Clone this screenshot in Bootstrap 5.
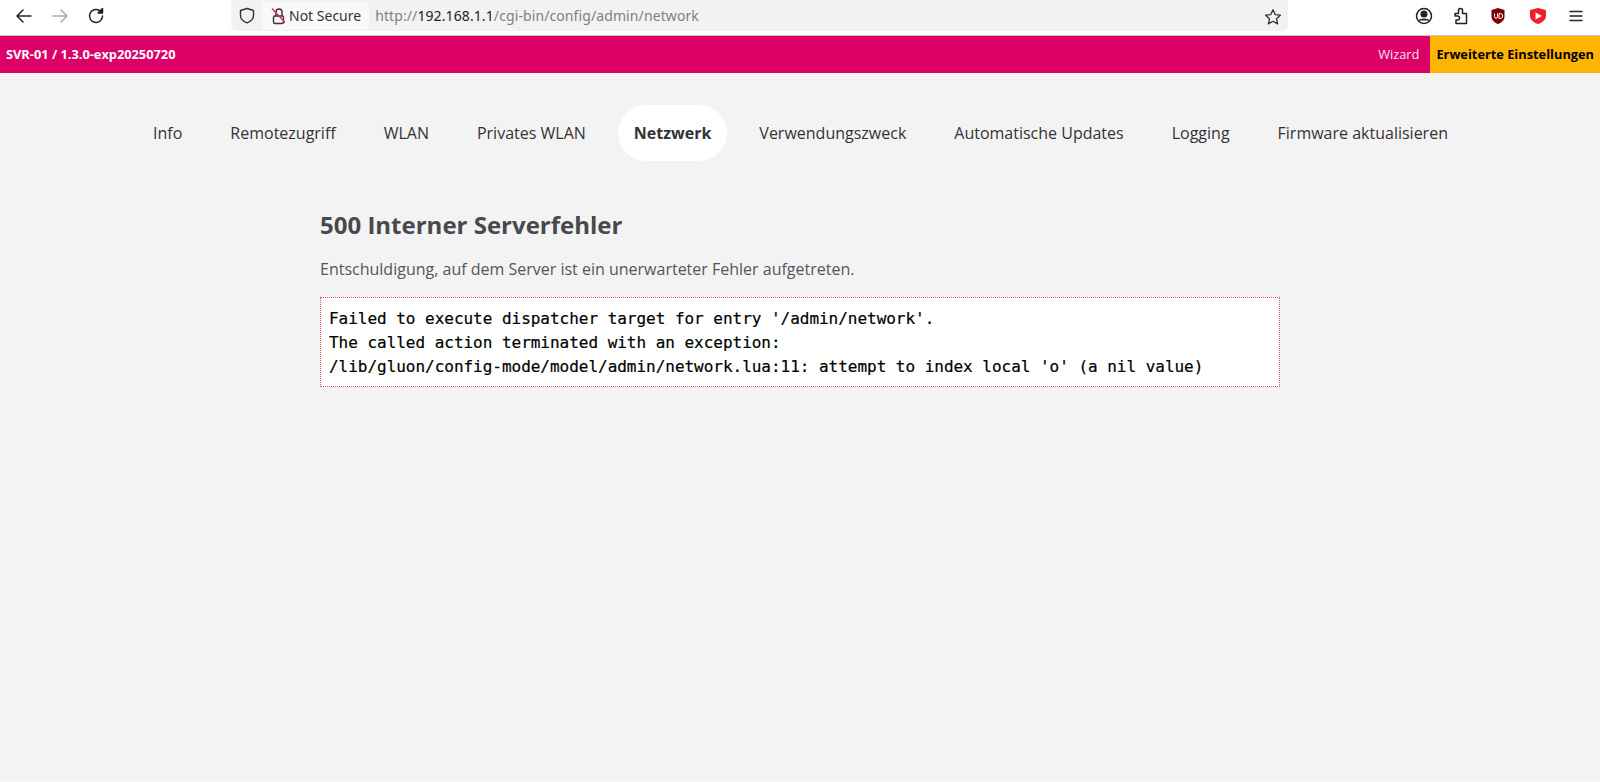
<!DOCTYPE html>
<html lang="de">
<head>
<meta charset="utf-8">
<title>Netzwerk</title>
<link rel="stylesheet" href="https://cdn.jsdelivr.net/npm/bootstrap@5.3.0/dist/css/bootstrap.min.css">
<style>
html,body{height:100%;}
body{background:#f3f3f3;font-family:"Open Sans","Noto Sans",sans-serif;overflow:hidden;border-bottom:1px solid #f7f7f7;}
.chrome-bar{height:36px;background:#fff;border-bottom:1px solid #c8c8c8;}
.chrome-nav{width:231px;height:31px;padding-left:15px;gap:18px;}
.chrome-btn{width:18px;height:18px;display:block;}
.url-box{width:1057px;height:31px;background:#f2f2f2;border-radius:0 0 6px 6px;font-family:"Noto Sans",sans-serif;font-size:14px;}
.shield-wrap{width:31px;}
.secure-chip{height:28px;background:#f9f9f9;border-radius:4px;padding:0 8px 0 9px;color:#333;gap:3px;margin-right:6px;}
.url-text{color:#808080;letter-spacing:.1px;}
.url-text b{font-weight:400;color:#222;}
.star-wrap{padding-right:6px;}
.tool-row{width:312px;height:31px;padding-left:127px;gap:19px;}
.tool-ico{width:18px;height:18px;display:block;flex:none;}
.tool-ico:nth-child(4){margin-left:3px;}
.tool-ico:nth-child(5){margin-left:1px;}
.top-strip{height:37px;background:#dc0067;color:#fff;font-size:12.8px;}
.site-name{font-weight:700;padding-left:6px;}
.wizard-link{color:#fff;text-decoration:none;padding-right:11px;opacity:.9;}
.expert-link{background:#ffb400;color:#000;font-weight:700;padding:0 6px;text-decoration:none;height:37px;display:flex;align-items:center;}
.main-nav{margin-top:32px;gap:16px;padding-left:1px;}
.main-nav .nav-link{color:#333;padding:16px;line-height:24px;font-size:16px;border-radius:28px;}
.main-nav .nav-link.is-on{background:#fff;font-weight:700;}
.content-col{width:960px;margin:0 auto;padding-top:49px;}
.err-title{font-size:24px;font-weight:700;color:#48484e;line-height:30px;margin:0 0 17px;}
.err-text{font-size:16px;line-height:24px;color:#55555b;margin:0 0 16px;}
.err-box{background:#fff;border:1px dotted #e8505a;padding:9px 8px 7px;font-family:"DejaVu Sans Mono",monospace;font-size:16px;letter-spacing:-.025px;-webkit-text-stroke:.2px #000;line-height:24px;color:#000;margin:0;white-space:pre-wrap;overflow:hidden;}
</style>
</head>
<body>
<div class="chrome-bar d-flex align-items-start">
  <div class="chrome-nav d-flex align-items-center">
    <svg class="chrome-btn" viewBox="0 0 18 18" fill="none" stroke="#222" stroke-width="1.5" stroke-linecap="round" stroke-linejoin="round"><path d="M16 9H2M8 3 2 9l6 6"/></svg>
    <svg class="chrome-btn" viewBox="0 0 18 18" fill="none" stroke="#aaa" stroke-width="1.5" stroke-linecap="round" stroke-linejoin="round"><path d="M2 9h14M10 3l6 6-6 6"/></svg>
    <svg class="chrome-btn" viewBox="0 0 18 18" fill="none" stroke="#222" stroke-width="1.5" stroke-linecap="round" stroke-linejoin="round"><path d="M15.500 9A6.500 6.500 0 1 1 12.500 3.500"/><path d="M15.500 1.500v4.500h-4.500z" fill="#222"/></svg>
  </div>
  <div class="url-box d-flex align-items-center">
    <div class="shield-wrap d-flex justify-content-center">
      <svg width="16" height="17" viewBox="0 0 16 17" fill="none" stroke="#333" stroke-width="1.4" stroke-linejoin="round"><path d="M8 1.500 14.500 3.500v5c0 3.500-2.700 6-6.500 7.300C4.200 14.500 1.500 12 1.500 8.500v-5z"/></svg>
    </div>
    <div class="secure-chip d-flex align-items-center">
      <svg width="15" height="18" viewBox="0 0 15 18" fill="none" stroke="#333" stroke-width="1.4"><path d="M5 9V5a3 3 0 0 1 6 0v4"/><rect x="2.500" y="9" width="10" height="7.500" rx="1.500"/><path d="M1 1.500 14 15.500" stroke="#e22850"/></svg>
      <span>Not Secure</span>
    </div>
    <span class="url-text flex-grow-1">http://<b>192.168.1.1</b>/cgi-bin/config/admin/network</span>
    <div class="star-wrap">
      <svg width="18" height="18" viewBox="0 0 18 18" fill="none" stroke="#333" stroke-width="1.3" stroke-linejoin="round"><path d="m9 1.800 2.200 4.800 5.200.6-3.900 3.500 1.100 5.200L9 13.300 4.400 15.900l1.100-5.200L1.600 7.200l5.200-.6z"/></svg>
    </div>
  </div>
  <div class="tool-row d-flex align-items-center">
    <svg class="tool-ico" viewBox="0 0 18 18" fill="none" stroke="#222" stroke-width="1.500"><circle cx="9" cy="9" r="7.500"/><circle cx="9" cy="7" r="2.800" fill="#222"/><path d="M4 13.500c1-2 9-2 10 0" fill="#222" stroke-width="1.200"/></svg>
    <svg class="tool-ico" viewBox="0 0 18 18" fill="none" stroke="#222" stroke-width="1.500" stroke-linejoin="round"><path d="M3 7h3.500V4a2 2 0 1 1 4 0v3h4v10H4v-3.500h1.500a2 2 0 1 0 0-4H3z" transform="translate(0 -.5)"/></svg>
    <svg class="tool-ico" viewBox="0 0 18 18"><path d="M9 1 15.500 3v6.500c0 3.500-2.700 6-6.500 7.500-3.800-1.500-6.500-4-6.500-7.500V3z" fill="#800000"/><path d="M5.500 6.500v3.200a1.500 1.500 0 0 0 3 0V6.500M10 6.500h1.200a2 2 0 0 1 0 5H10z" fill="none" stroke="#fff" stroke-width="1"/></svg>
    <svg class="tool-ico" viewBox="0 0 18 18"><path d="M9 1 17 3v6c0 3.800-3.500 6.500-8 8-4.500-1.500-8-4.200-8-8V3z" fill="#f0202a"/><path d="M6.500 5.500 13 9l-6.500 3.500z" fill="#fff"/></svg>
    <svg class="tool-ico" viewBox="0 0 18 18" stroke="#222" stroke-width="1.500" stroke-linecap="round"><path d="M3 4.500h12M3 9h12M3 13.500h12"/></svg>
  </div>
</div>

<div class="top-strip d-flex align-items-center justify-content-between">
  <span class="site-name">SVR-01 / 1.3.0-exp20250720</span>
  <div class="d-flex align-items-center">
    <a class="wizard-link" href="#">Wizard</a>
    <a class="expert-link" href="#">Erweiterte Einstellungen</a>
  </div>
</div>

<ul class="nav main-nav justify-content-center">
  <li class="nav-item"><a class="nav-link" href="#">Info</a></li>
  <li class="nav-item"><a class="nav-link" href="#">Remotezugriff</a></li>
  <li class="nav-item"><a class="nav-link" href="#">WLAN</a></li>
  <li class="nav-item"><a class="nav-link" href="#">Privates WLAN</a></li>
  <li class="nav-item"><a class="nav-link is-on" href="#">Netzwerk</a></li>
  <li class="nav-item"><a class="nav-link" href="#">Verwendungszweck</a></li>
  <li class="nav-item"><a class="nav-link" href="#">Automatische Updates</a></li>
  <li class="nav-item"><a class="nav-link" href="#">Logging</a></li>
  <li class="nav-item"><a class="nav-link" href="#">Firmware aktualisieren</a></li>
</ul>

<div class="content-col">
  <h2 class="err-title">500 Interner Serverfehler</h2>
  <p class="err-text">Entschuldigung, auf dem Server ist ein unerwarteter Fehler aufgetreten.</p>
  <pre class="err-box">Failed to execute dispatcher target for entry '/admin/network'.
The called action terminated with an exception:
/lib/gluon/config-mode/model/admin/network.lua:11: attempt to index local 'o' (a nil value)</pre>
</div>
</body>
</html>
